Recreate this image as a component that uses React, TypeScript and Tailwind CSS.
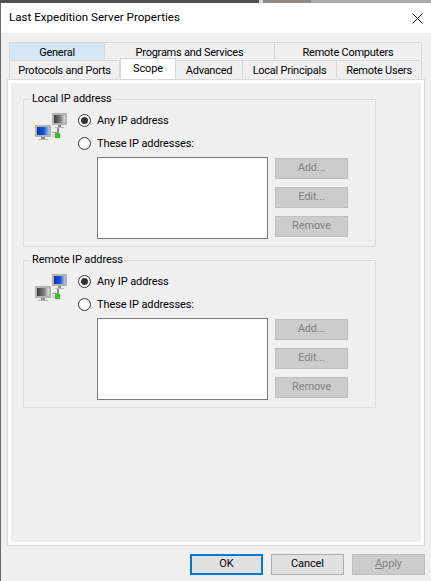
const font = "font-['Roboto',sans-serif]";

function MonitorIcon({ blueOnTop }: { blueOnTop: boolean }) {
  const top = blueOnTop ? "url(#blue)" : "url(#grey)";
  const bottom = blueOnTop ? "url(#grey)" : "url(#blue)";

  return (
    <svg width="32" height="28" viewBox="0 0 32 28" className="shrink-0">
      <defs>
        <linearGradient id="blue" x1="0" y1="0" x2="1" y2="0">
          <stop offset="0" stopColor="#0a2fb0" />
          <stop offset="0.6" stopColor="#1a5fd8" />
          <stop offset="1" stopColor="#a8c8f0" />
        </linearGradient>
        <linearGradient id="grey" x1="0" y1="0" x2="1" y2="0">
          <stop offset="0" stopColor="#3a3a3a" />
          <stop offset="0.6" stopColor="#808080" />
          <stop offset="1" stopColor="#e0e0e0" />
        </linearGradient>
      </defs>
      {/* top monitor */}
      <rect x="17" y="0" width="15" height="12" fill="#b4b4b4" />
      <rect x="19" y="2" width="11" height="8" fill={top} />
      <rect x="23" y="12" width="3" height="2" fill="#8c8c8c" />
      <rect x="20" y="14" width="9" height="1" fill="#b5b5b5" />
      {/* bottom monitor */}
      <rect x="0" y="12" width="16" height="12" fill="#b4b4b4" />
      <rect x="2" y="14" width="12" height="8" fill={bottom} />
      <rect x="6" y="24" width="4" height="2" fill="#8c8c8c" />
      <rect x="3" y="26" width="10" height="1" fill="#b5b5b5" />
      {/* link */}
      <rect x="22" y="15" width="2" height="5" fill="#8c8c8c" />
      <rect x="17" y="19" width="5" height="1" fill="#a0a0a0" />
      <rect x="17" y="21" width="3" height="3" fill="#d4d4d4" />
      <rect x="20" y="20" width="5" height="5" fill="#35c025" />
    </svg>
  );
}

function Radio({ checked, label }: { checked?: boolean; label: string }) {
  return (
    <div className="flex h-[13px] items-center gap-[6px]">
      <span className="flex size-[13px] items-center justify-center rounded-full border border-[#333333] bg-white">
        {checked && <span className="size-[7px] rounded-full bg-[#333333]" />}
      </span>
      <span className="whitespace-nowrap text-[11px] leading-[13px] tracking-[-0.1px] text-black">{label}</span>
    </div>
  );
}

function SideButton({ label }: { label: string }) {
  return (
    <div className="flex h-[21px] w-[73px] items-center justify-center border border-[#bfbfbf] bg-[#cccccc] text-[11px] tracking-[-0.1px] text-[#838383]">
      {label}
    </div>
  );
}

function IpGroup({ title, blueOnTop }: { title: string; blueOnTop: boolean }) {
  return (
    <fieldset className="h-[155px] border border-[#dcdcdc] pl-[11px]">
      <legend className="ml-[-4px] px-[1px] text-[11px] leading-[14px] tracking-[-0.1px] text-black">{title}</legend>
      <div className="flex items-start">
        <div className="mt-[7px]">
          <MonitorIcon blueOnTop={blueOnTop} />
        </div>
        <div className="ml-[11px] mt-[8px] flex flex-col gap-[10px]">
          <Radio checked label="Any IP address" />
          <Radio label="These IP addresses:" />
        </div>
      </div>
      <div className="ml-[62px] mt-[7px] flex gap-[7px]">
        <div className="h-[82px] w-[171px] border border-[#7a7a7a] bg-white" />
        <div className="mt-[1px] flex flex-col gap-[8px]">
          <SideButton label="Add..." />
          <SideButton label="Edit..." />
          <SideButton label="Remove" />
        </div>
      </div>
    </fieldset>
  );
}

function Tab({ label, className }: { label: string; className: string }) {
  return (
    <div className={`flex h-[18px] items-center justify-center whitespace-nowrap border-r border-t border-[#d9d9d9] pt-[4px] text-[11px] tracking-[-0.25px] text-black ${className}`}>
      {label}
    </div>
  );
}

export default function App() {
  return (
    <div className={`flex h-[581px] w-[431px] flex-col overflow-hidden bg-[#f0f0f0] ${font}`}>
      {/* Window behind the dialog */}
      <div className="flex h-[3px] shrink-0 bg-[#5f5f5f]">
        <div className="w-[259px] bg-[#4f4f4f]" />
        <div className="w-[4px] bg-[#d8d8d8]" />
        <div className="w-[48px] bg-[#8f8a86]" />
        <div className="flex-1 bg-[#a8a8a8]" />
      </div>

      <div className="flex min-h-0 flex-1 border-l border-[#6b6b6b]">
        <div className="flex min-w-0 flex-1 flex-col">
          {/* Title bar */}
          <div className="flex h-[30px] shrink-0 items-center justify-between bg-white pl-[8px] pr-[8px]">
            <span className="text-[11.6px] text-black">Last Expedition Server Properties</span>
            <svg width="11" height="11" viewBox="0 0 11 11" className="mt-[1px]">
              <path d="M0.5 0.5 L10.5 10.5 M10.5 0.5 L0.5 10.5" stroke="#222222" strokeWidth="1" fill="none" />
            </svg>
          </div>

          {/* Tabs */}
          <div className="relative ml-[8px] mr-[8px] mt-[9px] flex shrink-0 flex-col">
            <div className="flex">
              <Tab label="General" className="w-[96px] border-l bg-[#d5e6f5]" />
              <Tab label="Programs and Services" className="w-[170px]" />
              <Tab label="Remote Computers" className="w-[147px]" />
            </div>
            <div className="flex">
              <Tab label="Protocols and Ports" className="w-[111px] border-l" />
              <div className="z-10 -mt-[2px] flex h-[21px] w-[56px] items-start justify-center border-x border-t border-[#d9d9d9] bg-white pt-[3px] text-[11px] leading-[14px] tracking-[-0.1px] text-black">
                Scope
              </div>
              <Tab label="Advanced" className="w-[67px]" />
              <Tab label="Local Principals" className="w-[94px]" />
              <Tab label="Remote Users" className="w-[85px]" />
            </div>
          </div>

          {/* Panel */}
          <div className="ml-[6px] mr-[6px] flex h-[467px] shrink-0 flex-col border border-[#d9d9d9] bg-[#f0f0f0]">
            <div className="flex flex-1 flex-col gap-[6px] border-[3px] border-white pl-[12px] pr-[45px] pt-[9px]">
              <IpGroup title="Local IP address" blueOnTop={false} />
              <IpGroup title="Remote IP address" blueOnTop />
            </div>
          </div>

          {/* Footer */}
          <div className="mt-[8px] flex justify-end gap-[8px] pr-[6px]">
            <div className="flex h-[21px] w-[73px] items-center justify-center border-2 border-[#0078d7] bg-[#e1e1e1] text-[11px] text-black">
              OK
            </div>
            <div className="flex h-[21px] w-[73px] items-center justify-center border border-[#adadad] bg-[#e1e1e1] text-[11px] tracking-[-0.1px] text-black">
              Cancel
            </div>
            <div className="flex h-[21px] w-[73px] items-center justify-center border border-[#bfbfbf] bg-[#cccccc] text-[11px] tracking-[-0.1px] text-[#838383]">
              <span className="underline">A</span>pply
            </div>
          </div>
        </div>
      </div>
    </div>
  );
}
